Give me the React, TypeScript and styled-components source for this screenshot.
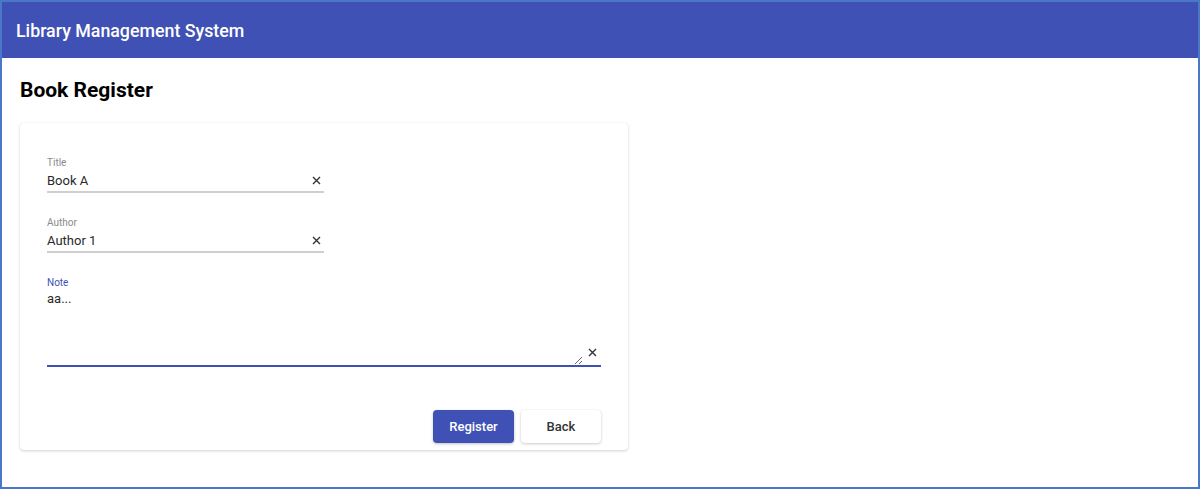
import styled, { createGlobalStyle } from "styled-components";

const GlobalStyle = createGlobalStyle`
  html, body {
    margin: 0;
    padding: 0;
    background: #ffffff;
    font-family: Roboto, "Liberation Sans", Arial, sans-serif;
  }
  * {
    box-sizing: border-box;
  }
`;

function ClearIcon() {
  return (
    <svg width="9" height="9" viewBox="0 0 9 9">
      <path d="M1 1L8 8M8 1L1 8" stroke="#333" strokeWidth="1.4" />
    </svg>
  );
}

function TextField({ label, value }: { label: string; value: string }) {
  return (
    <Field>
      <FieldLabel>{label}</FieldLabel>
      <InputRow>
        <Input defaultValue={value} />
        <ClearButton>
          <ClearIcon />
        </ClearButton>
      </InputRow>
    </Field>
  );
}

function App() {
  return (
    <>
      <GlobalStyle />
      <Frame>
        <AppBar>
          <AppTitle>Library Management System</AppTitle>
        </AppBar>
        <Main>
          <PageTitle>Book Register</PageTitle>
          <Card>
            <TextField label="Title" value="Book A" />
            <TextField label="Author" value="Author 1" />
            <NoteField>
              <FieldLabel $focused>Note</FieldLabel>
              <NoteRow>
                <NoteArea defaultValue="aa..." />
                <NoteClear>
                  <ClearIcon />
                </NoteClear>
              </NoteRow>
            </NoteField>
            <Actions>
              <Button $primary>Register</Button>
              <Button>Back</Button>
            </Actions>
          </Card>
        </Main>
      </Frame>
    </>
  );
}

const Frame = styled.div`
  height: 489px;
  border: 2px solid #4a78c8;
  display: flex;
  flex-direction: column;
  overflow: hidden;
`;

const AppBar = styled.header`
  height: 56px;
  background: #3f51b5;
  display: flex;
  align-items: center;
  padding: 0 14px;
  flex-shrink: 0;
`;

const AppTitle = styled.h1`
  margin: 0;
  color: #ffffff;
  font-size: 17.8px;
  font-weight: 500;
`;

const Main = styled.main`
  padding: 18px 18px 0 18px;
`;

const PageTitle = styled.h2`
  margin: 0 0 19px 0;
  font-size: 21px;
  font-weight: 700;
  color: #000;
  line-height: 28px;
`;

const Card = styled.section`
  width: 608px;
  height: 327px;
  background: #fff;
  border-radius: 4px;
  box-shadow: 0 1px 3px rgba(0, 0, 0, 0.18), 0 0 1px rgba(0, 0, 0, 0.06);
  padding: 34px 27px 7px 27px;
  display: flex;
  flex-direction: column;
`;

const Field = styled.div`
  width: 277px;
  margin-bottom: 24px;
`;

const FieldLabel = styled.label<{ $focused?: boolean }>`
  display: block;
  font-size: 10px;
  line-height: 12px;
  color: ${(p) => (p.$focused ? "#3f51b5" : "#8a8a8a")};
`;

const InputRow = styled.div`
  display: flex;
  align-items: center;
  border-bottom: 2px solid #cfcfcf;
  height: 24px;
`;

const Input = styled.input`
  flex: 1;
  border: none;
  outline: none;
  padding: 0;
  font-family: inherit;
  font-size: 13px;
  color: #2a2a2a;
  background: transparent;
`;

const ClearButton = styled.span`
  display: flex;
  align-items: center;
  justify-content: center;
  width: 16px;
`;

const NoteField = styled.div`
  width: 554px;
`;

const NoteRow = styled.div`
  display: flex;
  align-items: flex-end;
  border-bottom: 2px solid #3f51b5;
  padding-top: 2px;
`;

const NoteArea = styled.textarea`
  flex: 1;
  height: 74px;
  border: none;
  outline: none;
  padding: 0;
  font-family: inherit;
  font-size: 13px;
  line-height: 16px;
  color: #2a2a2a;
  resize: vertical;
  background: transparent;
`;

const NoteClear = styled.span`
  display: flex;
  align-items: center;
  justify-content: center;
  width: 18px;
  height: 18px;
  margin-bottom: 4px;
`;

const Actions = styled.div`
  margin-top: auto;
  width: 554px;
  display: flex;
  justify-content: flex-end;
  gap: 7px;
`;

const Button = styled.button<{ $primary?: boolean }>`
  width: ${(p) => (p.$primary ? "81px" : "80px")};
  height: 33px;
  border: none;
  border-radius: 4px;
  font-family: inherit;
  font-size: 13px;
  font-weight: 500;
  cursor: pointer;
  background: ${(p) => (p.$primary ? "#3f51b5" : "#ffffff")};
  color: ${(p) => (p.$primary ? "#ffffff" : "#333333")};
  box-shadow: ${(p) =>
    p.$primary
      ? "0 1px 3px rgba(0,0,0,0.25)"
      : "0 1px 3px rgba(0,0,0,0.2), 0 0 1px rgba(0,0,0,0.1)"};
`;

export default App;
